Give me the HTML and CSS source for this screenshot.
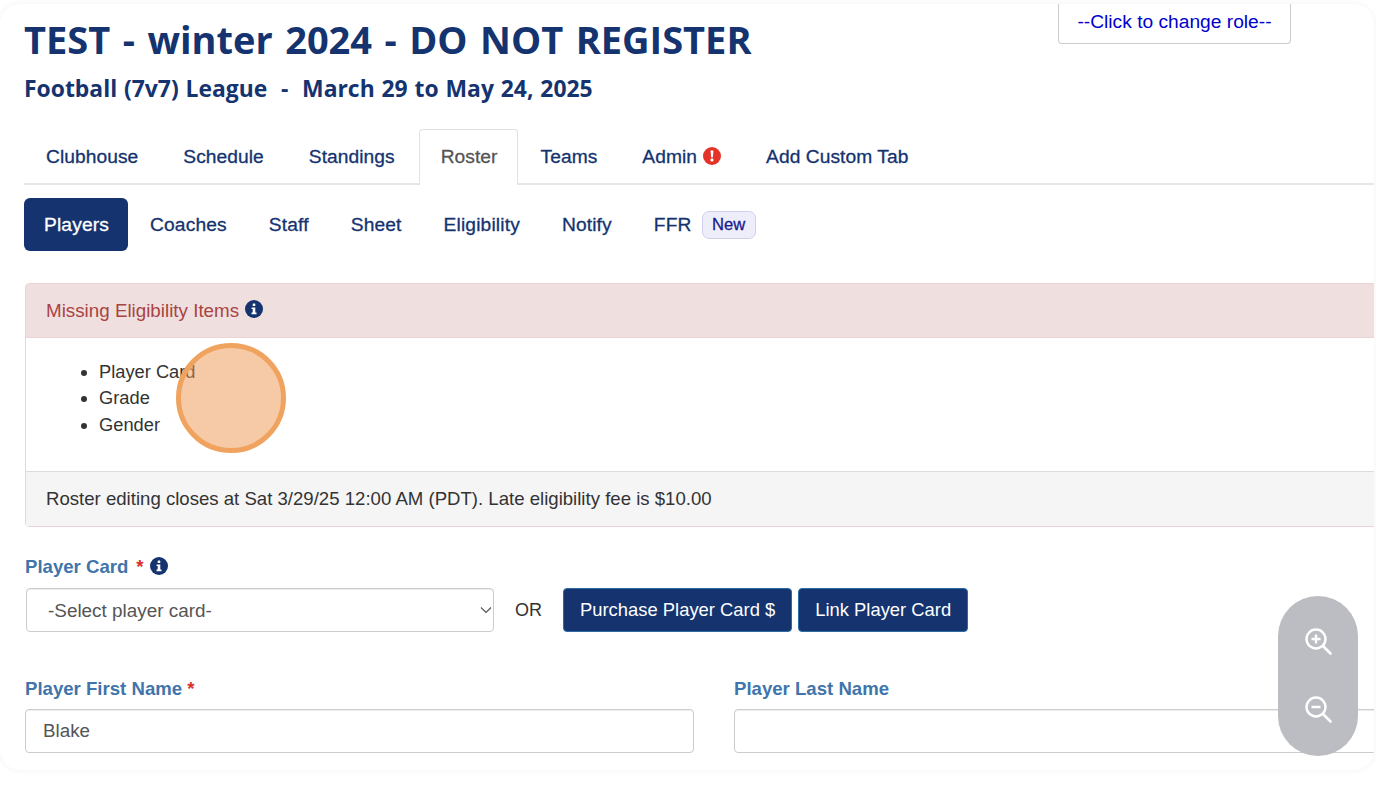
FILE: index.html
```html
<!DOCTYPE html>
<html lang="en">
<head>
<meta charset="utf-8">
<title>Roster</title>
<link rel="stylesheet" href="styles.css">
</head>
<body>
<div class="frame">
  <div class="page">
    <header class="header">
      <div class="titles">
        <h1 class="title">TEST - winter 2024 - DO NOT REGISTER</h1>
        <h2 class="subtitle">Football (7v7) League &nbsp;-&nbsp; March 29 to May 24, 2025</h2>
      </div>
      <div class="role">--Click to change role--</div>
    </header>
    <nav class="tabs">
      <a class="tab">Clubhouse</a>
      <a class="tab">Schedule</a>
      <a class="tab">Standings</a>
      <a class="tab tab-active">Roster</a>
      <a class="tab">Teams</a>
      <a class="tab">Admin
        <svg class="alert-icon" viewBox="0 0 18 18"><circle cx="9" cy="9" r="9" fill="#e4342a"/><path d="M7.6 3.6h2.8l-.4 6.6H8z" fill="#fff"/><circle cx="9" cy="12.9" r="1.6" fill="#fff"/></svg>
      </a>
      <a class="tab">Add Custom Tab</a>
    </nav>
    <nav class="pills">
      <a class="pill pill-active">Players</a>
      <a class="pill">Coaches</a>
      <a class="pill">Staff</a>
      <a class="pill">Sheet</a>
      <a class="pill">Eligibility</a>
      <a class="pill">Notify</a>
      <a class="pill">FFR<span class="badge">New</span></a>
    </nav>
    <section class="panel">
      <div class="panel-head">Missing Eligibility Items
        <svg class="info" viewBox="0 0 18 18"><circle cx="9" cy="9" r="9" fill="#14336f"/><rect x="7.7" y="3.4" width="2.6" height="2.6" rx=".6" fill="#fff"/><path d="M6.6 7.4h3.7v5.2h1.2v1.6H6.5v-1.6h1.2V9H6.6z" fill="#fff"/></svg>
      </div>
      <div class="panel-body">
        <ul class="missing">
          <li>Player Card</li>
          <li>Grade</li>
          <li>Gender</li>
        </ul>
      </div>
      <div class="panel-foot">Roster editing closes at Sat 3/29/25 12:00 AM (PDT). Late eligibility fee is $10.00</div>
    </section>
    <form class="form">
      <div class="label-row">
        <label class="label">Player Card</label><span class="req req-gap">*</span>
        <svg class="info" viewBox="0 0 18 18"><circle cx="9" cy="9" r="9" fill="#14336f"/><rect x="7.7" y="3.4" width="2.6" height="2.6" rx=".6" fill="#fff"/><path d="M6.6 7.4h3.7v5.2h1.2v1.6H6.5v-1.6h1.2V9H6.6z" fill="#fff"/></svg>
      </div>
      <div class="card-row">
        <div class="select-wrap">
          <select class="select"><option>-Select player card-</option></select>
          <svg class="chevron" viewBox="0 0 12 8"><path d="M1 1.5l5 5 5-5" fill="none" stroke="#555" stroke-width="1.2"/></svg>
        </div>
        <span class="or">OR</span>
        <button type="button" class="btn">Purchase Player Card $</button>
        <button type="button" class="btn">Link Player Card</button>
      </div>
      <div class="name-row">
        <div class="field">
          <label class="label">Player First Name <span class="req">*</span></label>
          <input class="input" value="Blake">
        </div>
        <div class="field field-wide">
          <label class="label">Player Last Name</label>
          <input class="input">
        </div>
      </div>
    </form>
  </div>
  <div class="marker"></div>
  <div class="zoomer">
    <svg class="zoom-icon" viewBox="0 0 28 28"><circle cx="12" cy="12" r="9.5" fill="none" stroke="#fff" stroke-width="2.4"/><path d="M19 19l7.5 7.5" stroke="#fff" stroke-width="2.6" stroke-linecap="round"/><path d="M7.5 12h9M12 7.5v9" stroke="#fff" stroke-width="2.4"/></svg>
    <svg class="zoom-icon" viewBox="0 0 28 28"><circle cx="12" cy="12" r="9.5" fill="none" stroke="#fff" stroke-width="2.4"/><path d="M19 19l7.5 7.5" stroke="#fff" stroke-width="2.6" stroke-linecap="round"/><path d="M7.5 12h9" stroke="#fff" stroke-width="2.4"/></svg>
  </div>
</div>
</body>
</html>
```
FILE: styles.css
```css
* { box-sizing: border-box; }
html, body { margin: 0; padding: 0; height: 786px; overflow: hidden; background: #fff; }
body { padding: 4px 2px 16px 0; font-family: "Liberation Sans", Arial, sans-serif; color: #333; }
.frame {
  position: relative;
  height: 766px;
  border-radius: 20px;
  overflow: hidden;
  background: #fff;
  box-shadow: 0 0 6px rgba(0, 0, 0, .06);
}
.page { width: 1440px; padding-left: 24px; }
.header { display: flex; justify-content: space-between; align-items: flex-start; width: 1267px; height: 125px; }
.title {
  margin: 13px 0 0;
  font: 700 38px/44px "Open Sans", sans-serif;
  word-spacing: 2.6px;
  color: #14336f;
  white-space: nowrap;
}
.subtitle {
  margin: 14px 0 0;
  font: 700 22.9px/28px "Open Sans", sans-serif;
  word-spacing: .9px;
  color: #14336f;
  white-space: nowrap;
}
.role {
  width: 233px;
  height: 40px;
  border: 1px solid #ccc;
  border-top: 0;
  border-radius: 0 0 4px 4px;
  background: #fff;
  color: #0000cc;
  font-size: 19.2px;
  line-height: 36px;
  text-align: center;
}
.tabs { display: flex; gap: 1px; height: 56px; border-bottom: 2px solid #e6e6e6; }
.tab {
  display: flex;
  align-items: center;
  gap: 6px;
  height: 56px;
  padding: 0 21px 2px;
  border: 1px solid transparent;
  border-bottom: 0;
  color: #14336f;
  font-size: 19.2px;
  letter-spacing: .06px;
  -webkit-text-stroke: .3px;
  white-space: nowrap;
}
.tab-active {
  margin-left: 1px;
  padding-right: 19px;
  border-color: #e2e2e2;
  border-radius: 4px 4px 0 0;
  background: #fff;
  color: #555;
}
.alert-icon { width: 18px; height: 18px; margin-top: -2px; }
.pills { display: flex; gap: 2px; margin-top: 13px; }
.pill {
  display: flex;
  align-items: center;
  height: 53px;
  padding: 0 20px;
  border-radius: 6px;
  color: #14336f;
  font-size: 19.2px;
  letter-spacing: .15px;
  -webkit-text-stroke: .3px;
  white-space: nowrap;
}
.pill-active { padding-right: 19px; background: #14336f; color: #fff; }
.badge {
  display: inline-flex;
  align-items: center;
  height: 28px;
  margin-left: 10px;
  padding: 0 9.5px;
  border: 1px solid #cfcfee;
  border-radius: 7px;
  background: #eeeefb;
  color: #1a1a8c;
  font-size: 16.6px;
  letter-spacing: 0;
  -webkit-text-stroke: .3px;
}
.panel {
  margin: 32px 0 0 1px;
  border: 1px solid #ebd3d6;
  border-radius: 4px;
  font-size: 18.6px;
}
.panel-head {
  display: flex;
  align-items: center;
  gap: 6px;
  height: 54px;
  padding: 0 20px;
  border-bottom: 1px solid #ebd3d6;
  background: #efdfdf;
  font-size: 18.8px;
  color: #a94442;
}
.info { width: 18px; height: 18px; margin-top: -3px; }
.panel-body { height: 133px; }
.missing { margin: 0; padding: 20.6px 0 0 73px; font-size: 18.3px; line-height: 26.5px; }
.panel-foot {
  height: 55px;
  padding: 0 20px;
  border-top: 1px solid #ddd;
  background: #f5f5f5;
  line-height: 54px;
}
.form { margin-left: 1px; font-size: 18.6px; }
.label-row { display: flex; align-items: center; height: 24px; margin-top: 28px; }
.label { color: #3f75ab; font-weight: 700; font-size: 18.6px; line-height: 24px; }
.req { color: #d9322b; font-weight: 700; }
.req-gap { margin: 0 6px 0 8px; }
.card-row { display: flex; align-items: center; margin-top: 9px; height: 44px; padding-left: 1px; }
.select-wrap { position: relative; width: 468px; height: 44px; }
.select {
  appearance: none;
  width: 100%;
  height: 100%;
  padding: 0 0 0 21px;
  border: 1px solid #ccc;
  border-radius: 4px;
  background: #fff;
  color: #555;
  font: 18.9px "Liberation Sans", Arial, sans-serif;
  box-shadow: inset 0 1px 1px rgba(0, 0, 0, .075);
}
.chevron { position: absolute; right: 2px; top: 18px; width: 12px; height: 8px; }
.or { margin: 0 21px; color: #333; font-size: 18px; }
.btn {
  height: 44px;
  margin-right: 6px;
  padding: 0 16px;
  border: 1px solid #2e6da4;
  border-radius: 4px;
  background: #14336f;
  color: #fff;
  font: 18.4px "Liberation Sans", Arial, sans-serif;
}
.name-row { display: flex; gap: 40px; margin-top: 45px; }
.field { display: flex; flex-direction: column; gap: 8px; width: 669px; }
.field-wide { width: 700px; }
.input {
  height: 44px;
  padding: 0 17px;
  border: 1px solid #ccc;
  border-radius: 4px;
  color: #555;
  font: 18.8px "Liberation Sans", Arial, sans-serif;
  box-shadow: inset 0 1px 1px rgba(0, 0, 0, .075);
}
.marker {
  position: absolute;
  left: 176px;
  top: 339px;
  width: 110px;
  height: 110px;
  border: 5px solid #f0a35e;
  border-radius: 50%;
  background: rgba(238, 150, 80, .5);
}
.zoomer {
  position: absolute;
  left: 1278px;
  top: 592px;
  display: flex;
  flex-direction: column;
  align-items: center;
  gap: 40px;
  width: 80px;
  height: 160px;
  padding-top: 31px;
  border-radius: 40px;
  background: #bcbdc2;
}
.zoom-icon { width: 28px; height: 28px; }
```
